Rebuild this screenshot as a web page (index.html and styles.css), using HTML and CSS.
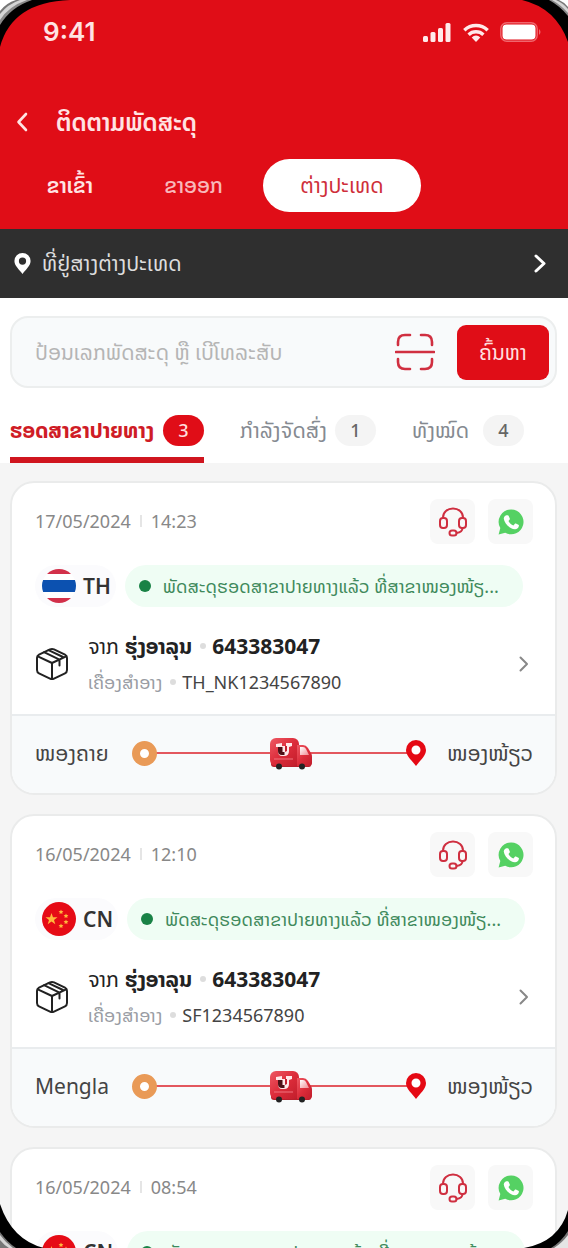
FILE: index.html
```
<!DOCTYPE html>
<html lang="lo">
<head>
<meta charset="utf-8">
<meta name="viewport" content="width=device-width, initial-scale=1">
<title>ຕິດຕາມພັດສະດຸ</title>
<link rel="stylesheet" href="styles.css">
</head>
<body>
<svg class="defs" aria-hidden="true">
  <defs>
    <linearGradient id="van-red" x1="0" y1="0" x2="1" y2="1"><stop offset="0" stop-color="#ee5964"/><stop offset=".5" stop-color="#dc2c3a"/><stop offset="1" stop-color="#c01d2b"/></linearGradient>
    <linearGradient id="glass" x1="0" y1="0" x2="1" y2="1"><stop offset="0" stop-color="#fff"/><stop offset="1" stop-color="#f08a92"/></linearGradient>
    <clipPath id="round"><circle cx="17" cy="17" r="17"/></clipPath>
  </defs>
  <symbol id="headset" viewBox="0 0 28 30"><g fill="none" stroke="#cf2f40" stroke-width="2" stroke-linecap="round" stroke-linejoin="round"><path d="M4 11V10.500C4 5 8.500 1.500 14 1.500S24 5 24 10.500V11"/><rect x="1" y="11" width="7" height="10" rx="3"/><rect x="20" y="11" width="7" height="10" rx="3"/><path d="M23.500 21c0 3-2 4.500-6 5"/><rect x="10.500" y="23.500" width="7" height="5" rx="2.500"/></g></symbol>
  <symbol id="whatsapp" viewBox="0 0 26 26"><path fill="#55d163" d="M13.300.5A12.400 12.400 0 1 1 7.200 23.800L.6 25.500 2.300 19A12.400 12.400 0 0 1 13.300.5z"/><path fill="#fff" d="M8.300 6.200h1.500c.4 0 .7.200.9.700l1.100 2.600c.1.400.1.700-.1 1l-1.200 1.500c1.100 2.200 2.700 3.600 4.900 4.500l1.500-1.700c.3-.4.600-.4 1-.2l2.500 1.200c.5.200.6.500.5.900-.2 2.300-2 3.600-4.100 3.500C11.500 19.700 6.300 14.300 5.800 9.800c-.1-1.700 1-3.300 2.500-3.600z"/></symbol>
  <symbol id="box" viewBox="0 0 34 34"><g fill="none" stroke="#222" stroke-width="2" stroke-linejoin="round" stroke-linecap="round"><path d="M15 2.400Q17 1.400 19 2.400L30 7.700Q32 8.700 32 11V23Q32 25.300 30 26.300L19 31.600Q17 32.600 15 31.600L4 26.300Q2 25.300 2 23V11Q2 8.700 4 7.700z"/><path d="M2.800 9.300 17 16 31.200 9.300M17 16V32M9 5.200 24.500 12.700V18.500M13.500 3.200 28 10"/></g></symbol>
  <symbol id="next" viewBox="0 0 10 16"><path d="M1.500 1.500 8 8 1.500 14.500" fill="none" stroke="currentColor" stroke-width="2" stroke-linecap="round" stroke-linejoin="round"/></symbol>
  <symbol id="next-bold" viewBox="0 0 12 19"><path d="M2 2 10 9.500 2 17" fill="none" stroke="currentColor" stroke-width="3" stroke-linecap="round" stroke-linejoin="round"/></symbol>
  <symbol id="pin" viewBox="0 0 20 26"><path fill="currentColor" fill-rule="evenodd" d="M10 0a10 10 0 0 1 10 10c0 6-6 10.500-10 16C6 20.500 0 16 0 10A10 10 0 0 1 10 0zm0 5.500a4.500 4.500 0 1 0 0 9 4.500 4.500 0 0 0 0-9z"/></symbol>
  <symbol id="van" viewBox="0 0 44 33"><path fill="#b8202d" d="M2 25h40v3q0 2-2 2H5q-3 0-3-3z"/><rect x="1" y="1" width="29" height="28" rx="6" fill="url(#van-red)"/><path fill="url(#van-red)" d="M28 8h6q3 0 5 3l3.500 6q.5 1 .5 3v6q0 3-3 3H28z"/><path fill="url(#glass)" d="M31 10h3q2 0 3 2l3 6h-9z"/><path fill="#ffe9ea" d="M7 7l6-1v3h4V6h6v3l-3 1v4q0 5-5 5h-2q-4 0-4-5v-4H7z"/><path fill="#4d1016" d="M9 10h4.500v5h2v3H13q-4 0-4-4z"/><path fill="#c41f2f" d="M16 9h2v5l-2 1z"/><path d="M5 22h19" stroke="#f0747e"/><circle cx="10" cy="29.500" r="3" fill="#222"/><circle cx="33" cy="29.500" r="3" fill="#222"/></symbol>
  <symbol id="flag-th" viewBox="0 0 34 34"><g clip-path="url(#round)"><path fill="#fff" d="M0 0h34v34H0z"/><path fill="#d2304a" d="M0 0h34v5H0zM0 29h34v5H0z"/><path fill="#0c51b0" d="M0 11h34v12H0z"/></g></symbol>
  <symbol id="flag-cn" viewBox="0 0 34 34"><circle cx="17" cy="17" r="17" fill="#e60b16"/><g fill="#ffb83c"><path d="M9.500 11l1.500 4.200h4.500L12 17.900l1.300 4.300-3.800-2.600-3.800 2.600L7 17.900l-3.500-2.700H8z"/><path id="s" d="M19 7.500l.7 1.500 1.700.2-1.200 1.200.3 1.700-1.500-.8-1.500.8.300-1.700-1.200-1.200 1.700-.2z"/><use href="#s" x="5" y="4"/><use href="#s" x="5" y="10"/><use href="#s" y="14"/></g></symbol>
</svg>

<div class="screen">
  <header class="header">
    <div class="status-bar">
      <span class="clock">9:41</span>
      <svg class="signal" viewBox="0 0 28 19" fill="#ffeaea"><rect y="13" width="5" height="6" rx="1.500"/><rect x="7.500" y="9" width="5" height="10" rx="1.500"/><rect x="15" y="5" width="5" height="14" rx="1.500"/><rect x="22.500" width="5" height="19" rx="1.500"/></svg>
      <svg class="wifi" viewBox="0 0 26 19"><g fill="none" stroke="#ffeaea" stroke-width="3.400"><path d="M1.300 7.200a17 17 0 0 1 23.400 0"/><path d="M5.600 11.700a10.800 10.800 0 0 1 14.800 0"/></g><path fill="#ffeaea" d="M8.700 14.400a6 6 0 0 1 8.600 0L13 19z"/></svg>
      <svg class="battery" viewBox="0 0 42 20"><rect x=".8" y=".8" width="36.400" height="18.400" rx="6" fill="none" stroke="#f0666d" stroke-width="1.400"/><rect x="2.500" y="2.500" width="33" height="15" rx="4" fill="#fff"/><path fill="#f0666d" d="M39 7q3 3 0 6z"/></svg>
    </div>
    <div class="title-bar">
      <button class="back" aria-label="ກັບຄືນ"><svg viewBox="0 0 12 20"><path d="M10 2 2.500 10 10 18" fill="none" stroke="#ffe3e3" stroke-width="2.600" stroke-linecap="round" stroke-linejoin="round"/></svg></button>
      <h1>ຕິດຕາມພັດສະດຸ</h1>
    </div>
    <nav class="direction">
      <button class="in">ຂາເຂົ້າ</button>
      <button class="out">ຂາອອກ</button>
      <button class="abroad">ຕ່າງປະເທດ</button>
    </nav>
  </header>

  <a class="address" href="#">
    <svg class="address-pin"><use href="#pin"/></svg>
    <span>ທີ່ຢູ່ສາງຕ່າງປະເທດ</span>
    <svg class="address-next"><use href="#next-bold"/></svg>
  </a>

  <section class="top">
    <form class="search">
      <input type="text" aria-label="ຄົ້ນຫາ" placeholder="ປ້ອນເລກພັດສະດຸ ຫຼື ເບີໂທລະສັບ">
      <button class="scan" type="button" aria-label="ສະແກນ"><svg viewBox="0 0 40 38"><path d="M3 12V9Q3 2 10 2H15M26 2H30Q37 2 37 9V12M37 26V29Q37 36 30 36H26M15 36H10Q3 36 3 29V26M1 19H39" fill="none" stroke="#d02f40" stroke-width="2.600" stroke-linecap="round"/></svg></button>
      <button class="go" type="submit">ຄົ້ນຫາ</button>
    </form>
    <nav class="tabs">
      <button class="tab current"><span>ຮອດສາຂາປາຍທາງ</span><b>3</b></button>
      <button class="tab sending"><span>ກຳລັງຈັດສົ່ງ</span><b>1</b></button>
      <button class="tab all"><span>ທັງໝົດ</span><b>4</b></button>
    </nav>
  </section>

  <main class="list">
    <article class="card">
      <div class="card-body">
        <div class="card-top">
          <time>17/05/2024<i></i>14:23</time>
          <button class="tool" aria-label="ຊ່ວຍເຫຼືອ"><svg class="headset"><use href="#headset"/></svg></button>
          <button class="tool" aria-label="WhatsApp"><svg class="whatsapp"><use href="#whatsapp"/></svg></button>
        </div>
        <div class="state">
          <div class="country"><svg><use href="#flag-th"/></svg>TH</div>
          <div class="message"><i></i><span>ພັດສະດຸຮອດສາຂາປາຍທາງແລ້ວ ທີ່ສາຂາໜອງໜ້ຽ...</span></div>
        </div>
        <div class="parcel">
          <svg class="box"><use href="#box"/></svg>
          <div class="details">
            <p class="from"><span>ຈາກ</span> <strong>ຮຸ່ງອາລຸນ</strong><i></i><b>643383047</b></p>
            <p class="kind"><span>ເຄື່ອງສຳອາງ</span><i></i><em>TH_NK1234567890</em></p>
          </div>
          <svg class="next"><use href="#next"/></svg>
        </div>
      </div>
      <footer class="route">
        <span class="place">ໜອງຄາຍ</span>
        <div class="line"><i class="start"></i><svg class="van"><use href="#van"/></svg><svg class="end"><use href="#pin"/></svg></div>
        <span class="place dest">ໜອງໜ້ຽວ</span>
      </footer>
    </article>

    <article class="card">
      <div class="card-body">
        <div class="card-top">
          <time>16/05/2024<i></i>12:10</time>
          <button class="tool" aria-label="ຊ່ວຍເຫຼືອ"><svg class="headset"><use href="#headset"/></svg></button>
          <button class="tool" aria-label="WhatsApp"><svg class="whatsapp"><use href="#whatsapp"/></svg></button>
        </div>
        <div class="state">
          <div class="country"><svg><use href="#flag-cn"/></svg>CN</div>
          <div class="message"><i></i><span>ພັດສະດຸຮອດສາຂາປາຍທາງແລ້ວ ທີ່ສາຂາໜອງໜ້ຽ...</span></div>
        </div>
        <div class="parcel">
          <svg class="box"><use href="#box"/></svg>
          <div class="details">
            <p class="from"><span>ຈາກ</span> <strong>ຮຸ່ງອາລຸນ</strong><i></i><b>643383047</b></p>
            <p class="kind"><span>ເຄື່ອງສຳອາງ</span><i></i><em>SF1234567890</em></p>
          </div>
          <svg class="next"><use href="#next"/></svg>
        </div>
      </div>
      <footer class="route">
        <span class="place">Mengla</span>
        <div class="line"><i class="start"></i><svg class="van"><use href="#van"/></svg><svg class="end"><use href="#pin"/></svg></div>
        <span class="place dest">ໜອງໜ້ຽວ</span>
      </footer>
    </article>

    <article class="card">
      <div class="card-body">
        <div class="card-top">
          <time>16/05/2024<i></i>08:54</time>
          <button class="tool" aria-label="ຊ່ວຍເຫຼືອ"><svg class="headset"><use href="#headset"/></svg></button>
          <button class="tool" aria-label="WhatsApp"><svg class="whatsapp"><use href="#whatsapp"/></svg></button>
        </div>
        <div class="state">
          <div class="country"><svg><use href="#flag-cn"/></svg>CN</div>
          <div class="message"><i></i><span>ພັດສະດຸຮອດສາຂາປາຍທາງແລ້ວ ທີ່ສາຂາໜອງໜ້ຽ...</span></div>
        </div>
      </div>
    </article>
  </main>

  <svg class="corner top-left" viewBox="0 0 80 60"><path fill="#000" d="M0 0H70Q12 2 0 47z"/><path fill="#888" d="M0 0H32Q11 7 0 25z"/><path fill="#d5d5d5" d="M0 0H27Q9 6 0 20z"/><path fill="#777" d="M0 0H20Q8 4 0 14z"/><path fill="#fff" d="M0 0H16Q6 3 0 11z"/></svg>
  <svg class="corner top-right" viewBox="0 0 80 60"><path fill="#000" d="M0 0H46Q12 8 0 42z"/><path fill="#888" d="M0 0H19Q8 6 0 16z"/><path fill="#d5d5d5" d="M0 0H16Q7 5 0 13z"/><path fill="#777" d="M0 0H12Q5 3 0 9z"/><path fill="#fff" d="M0 0H9Q4 2 0 7z"/></svg>
  <svg class="corner bottom-left" viewBox="0 0 80 60"><path fill="#000" d="M0 0H44Q12 8 0 44z"/><path fill="#777" d="M0 0H16Q7 6 0 16z"/><path fill="#d5d5d5" d="M0 0H13Q6 5 0 13z"/><path fill="#777" d="M0 0H9Q4 3 0 8z"/></svg>
  <svg class="corner bottom-right" viewBox="0 0 80 60"><path fill="#000" d="M0 0H44Q9 6 0 38z"/><path fill="#777" d="M0 0H17Q7 6 0 17z"/><path fill="#e5e5e5" d="M0 0H14Q6 5 0 13z"/></svg>
</div>
</body>
</html>
```
FILE: styles.css
```
* { box-sizing: border-box; margin: 0; }
body { font-family: "Noto Sans", "Noto Sans Lao", "DejaVu Sans", sans-serif; color: #333; background: #fff; }
button { border: 0; padding: 0; background: none; font: inherit; color: inherit; white-space: nowrap; }
svg { display: block; flex: none; }
i { display: block; flex: none; }
.defs { position: absolute; width: 0; height: 0; }

.screen { position: relative; display: flex; flex-direction: column; height: 100vh; overflow: hidden; }
.corner { position: absolute; width: 80px; height: 60px; pointer-events: none; }
.top-left { top: 0; left: 0; }
.top-right { top: 0; right: 0; transform: scaleX(-1); }
.bottom-left { bottom: 0; left: 0; transform: scaleY(-1); }
.bottom-right { bottom: 0; right: 0; transform: scale(-1, -1); }

.header { flex: none; background: #e00d17; color: #ffe3e3; padding-bottom: 17px; }
.status-bar { display: flex; align-items: center; height: 64px; padding: 0 26px 0 43px; }
.clock { margin-right: auto; font: 600 26px/32px Inter, sans-serif; }
.signal { width: 28px; height: 19px; }
.wifi { width: 26px; height: 19px; margin: 0 11px 0 12px; }
.battery { width: 42px; height: 20px; }
.title-bar { display: flex; align-items: center; gap: 28px; height: 95px; padding: 20px 16px 0; }
.back svg { width: 12px; height: 20px; }
h1 { font-size: 24px; line-height: 32px; font-weight: 600; white-space: nowrap; }
.direction { display: flex; align-items: center; height: 53px; padding: 0 16px; font-size: 21px; }
.direction button { height: 53px; }
.in { width: 108px; font-weight: 600; }
.out { width: 139px; opacity: .8; font-weight: 500; }
.direction .abroad { width: 158px; border-radius: 27px; background: #fff; color: #cf2f3a; }

.address { flex: none; display: flex; align-items: center; height: 69px; padding: 0 22px 0 14px; gap: 11px; background: #2f2f2f; color: #ddd; font-size: 21px; text-decoration: none; }
.address span { flex: 1; white-space: nowrap; }
.address svg { color: #fff; }
.address-pin { width: 17px; height: 21px; }
.address-next { width: 12px; height: 19px; }

.top { flex: none; padding: 18px 11px 0 10px; background: #fff; }
.search { display: flex; align-items: center; height: 72px; padding: 0 6px 0 23px; border: 2px solid #eceeee; border-radius: 18px; background: #f8fafb; }
.search input { flex: 1; min-width: 0; height: 40px; border: 0; padding: 0; background: none; font: 21px "Noto Sans", "Noto Sans Lao", "DejaVu Sans", sans-serif; }
.search input::placeholder { color: #b5b5b5; opacity: 1; }
.scan svg { width: 40px; height: 38px; }
.go { width: 92px; height: 55px; margin-left: 22px; border-radius: 9px; background: #e00d17; color: #ffdede; font-size: 21px; }
.tabs { display: flex; height: 75px; padding-top: 12px; }
.tab { display: flex; align-items: center; justify-content: space-between; height: 63px; padding-bottom: 2px; color: #858a91; font-size: 21px; }
.tab b { width: 41px; height: 31px; border-radius: 16px; background: #f4f4f4; color: #666; font-size: 18px; line-height: 31px; font-weight: 500; text-align: center; }
.tab.current { width: 194px; background: linear-gradient(#d0151f, #d0151f) bottom / 100% 6px no-repeat; color: #cf1c26; font-weight: 700; border-radius: 5px 5px 0 0; }
.tab.current b { background: #e00d17; color: #ffdede; }
.tab.sending { margin-left: 36px; width: 136px; }
.tab.all { margin-left: 36px; width: 112px; }

.list { flex: 1; min-height: 0; overflow: hidden; display: flex; flex-direction: column; gap: 19px; padding: 18px 11px 0 10px; background: #f5f5f5; }
.card { flex: none; border: 2px solid #eaebeb; border-radius: 24px; background: #fff; overflow: hidden; }
.card-body { padding: 16px 22px 0 23px; height: 231px; }
.card-top { display: flex; align-items: center; gap: 13px; height: 45px; }
time { display: flex; align-items: center; margin-right: auto; color: #888; font-size: 18px; line-height: 24px; padding-bottom: 2px; }
time i { width: 2px; height: 12px; margin: 0 9px; background: #e5e5e5; }
.tool { display: grid; place-items: center; width: 45px; height: 45px; border-radius: 8px; background: #f8f8f8; }
.headset { width: 28px; height: 30px; }
.whatsapp { width: 26px; height: 26px; }
.state { display: flex; gap: 9px; height: 42px; margin: 21px 8px 0 0; }
.country { display: flex; align-items: center; gap: 7px; flex: none; padding: 0 5px 0 7px; border-radius: 21px; background: #fbfbfd; font-size: 21px; font-weight: 600; }
.country svg { width: 34px; height: 34px; }
.message { display: flex; align-items: center; gap: 12px; padding: 0 24px 0 14px; border-radius: 21px; background: #effdf4; color: #3f8a5c; font-size: 18px; white-space: nowrap; }
.message i { width: 12px; height: 12px; border-radius: 50%; background: #198246; }
.parcel { display: flex; align-items: center; padding-top: 21px; }
.box { width: 34px; height: 34px; margin-right: 19px; }
.details { flex: 1; }
.details p { display: flex; align-items: center; height: 36px; color: #222; font-size: 21px; white-space: nowrap; }
.details i { width: 6px; height: 6px; margin: 0 6px 0 8px; border-radius: 50%; background: #ddd; }
.details strong { margin-left: 6px; }
.details .kind { color: #999ca3; font-size: 18px; }
.kind em { color: #444; font-style: normal; }
.next { width: 10px; height: 16px; margin-right: 4px; color: #888; }
.route { display: flex; align-items: center; height: 79px; padding: 0 22px 3px 23px; border-top: 2px solid #e9ecee; background: #f8fafb; }
.place { flex: none; width: 97px; color: #444; font-size: 21px; white-space: nowrap; }
.dest { width: 107px; text-align: right; }
.line { flex: 1; display: flex; align-items: center; justify-content: space-between; background: linear-gradient(#e3575e, #e3575e) center / calc(100% - 30px) 2px no-repeat; }
.start { width: 25px; height: 25px; border: 8px solid #e99a57; border-radius: 50%; background: #fff; }
.van { width: 44px; height: 33px; margin-left: 18px; }
.end { width: 20px; height: 26px; color: #e50914; background: radial-gradient(circle at 10px 10px, #fff 5px, transparent 6px); }
```
